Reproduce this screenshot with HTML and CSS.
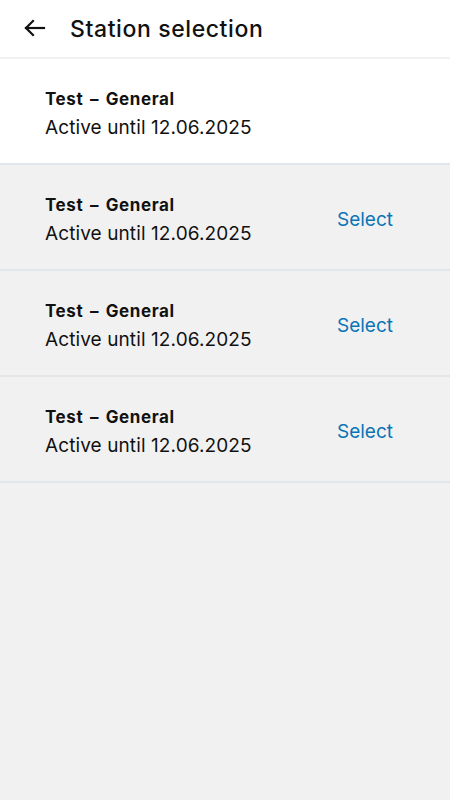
FILE: index.html
```html
<!DOCTYPE html>
<html lang="en">
<head>
<meta charset="utf-8">
<title>Station selection</title>
<link rel="stylesheet" href="styles.css">
</head>
<body>
<div class="app">
  <header class="topbar">
    <button class="back" aria-label="Back">
      <svg width="24" height="20" viewBox="0 0 24 20" fill="none" stroke="#111" stroke-width="2.2" stroke-linecap="square">
        <path d="M3 10H21"/>
        <path d="M10 3L3 10L10 17"/>
      </svg>
    </button>
    <h1 class="title">Station selection</h1>
  </header>
  <ul class="list">
    <li class="row current">
      <div class="info">
        <div class="name">Test – General</div>
        <div class="sub">Active until 12.06.2025</div>
      </div>
    </li>
    <li class="row">
      <div class="info">
        <div class="name">Test – General</div>
        <div class="sub">Active until 12.06.2025</div>
      </div>
      <button class="select">Select</button>
    </li>
    <li class="row">
      <div class="info">
        <div class="name">Test – General</div>
        <div class="sub">Active until 12.06.2025</div>
      </div>
      <button class="select">Select</button>
    </li>
    <li class="row">
      <div class="info">
        <div class="name">Test – General</div>
        <div class="sub">Active until 12.06.2025</div>
      </div>
      <button class="select">Select</button>
    </li>
  </ul>
</div>
</body>
</html>
```

FILE: styles.css
```css
* { box-sizing: border-box; }
html, body {
  margin: 0;
  padding: 0;
  height: 100%;
}
body {
  background: #f1f1f2;
  font-family: Inter, "Open Sans", "Liberation Sans", sans-serif;
  color: #111;
}
.app {
  min-height: 100%;
}
.topbar {
  height: 59px;
  background: #fff;
  border-bottom: 2px solid #f0f1f2;
  display: flex;
  align-items: center;
  padding-left: 23px;
  gap: 23px;
}
.back {
  border: 0;
  background: none;
  padding: 0;
  display: flex;
  margin-top: -1px;
}
.title {
  margin: 0;
  font-size: 23px;
  font-weight: 500;
  letter-spacing: 0.6px;
  color: #111;
  margin-top: 1px;
}
.list {
  list-style: none;
  margin: 0;
  padding: 0;
}
.row {
  height: 106px;
  border-bottom: 2px solid #e3e6e9;
  display: flex;
  align-items: center;
  justify-content: space-between;
  padding: 4px 57px 0 45px;
  background: #f1f1f2;
}
.row.current {
  background: #fff;
}
.info {
  display: flex;
  flex-direction: column;
  gap: 9px;
  margin-top: 2px;
}
.name {
  font-size: 17px;
  font-weight: 700;
  line-height: 19px;
  letter-spacing: 0.6px;
  word-spacing: 2px;
}
.sub {
  font-size: 19px;
  font-weight: 400;
  line-height: 20px;
  letter-spacing: 0.1px;
}
.select {
  border: 0;
  background: none;
  padding: 0;
  font-family: inherit;
  font-size: 19px;
  color: #0a74b6;
  cursor: pointer;
}
```
